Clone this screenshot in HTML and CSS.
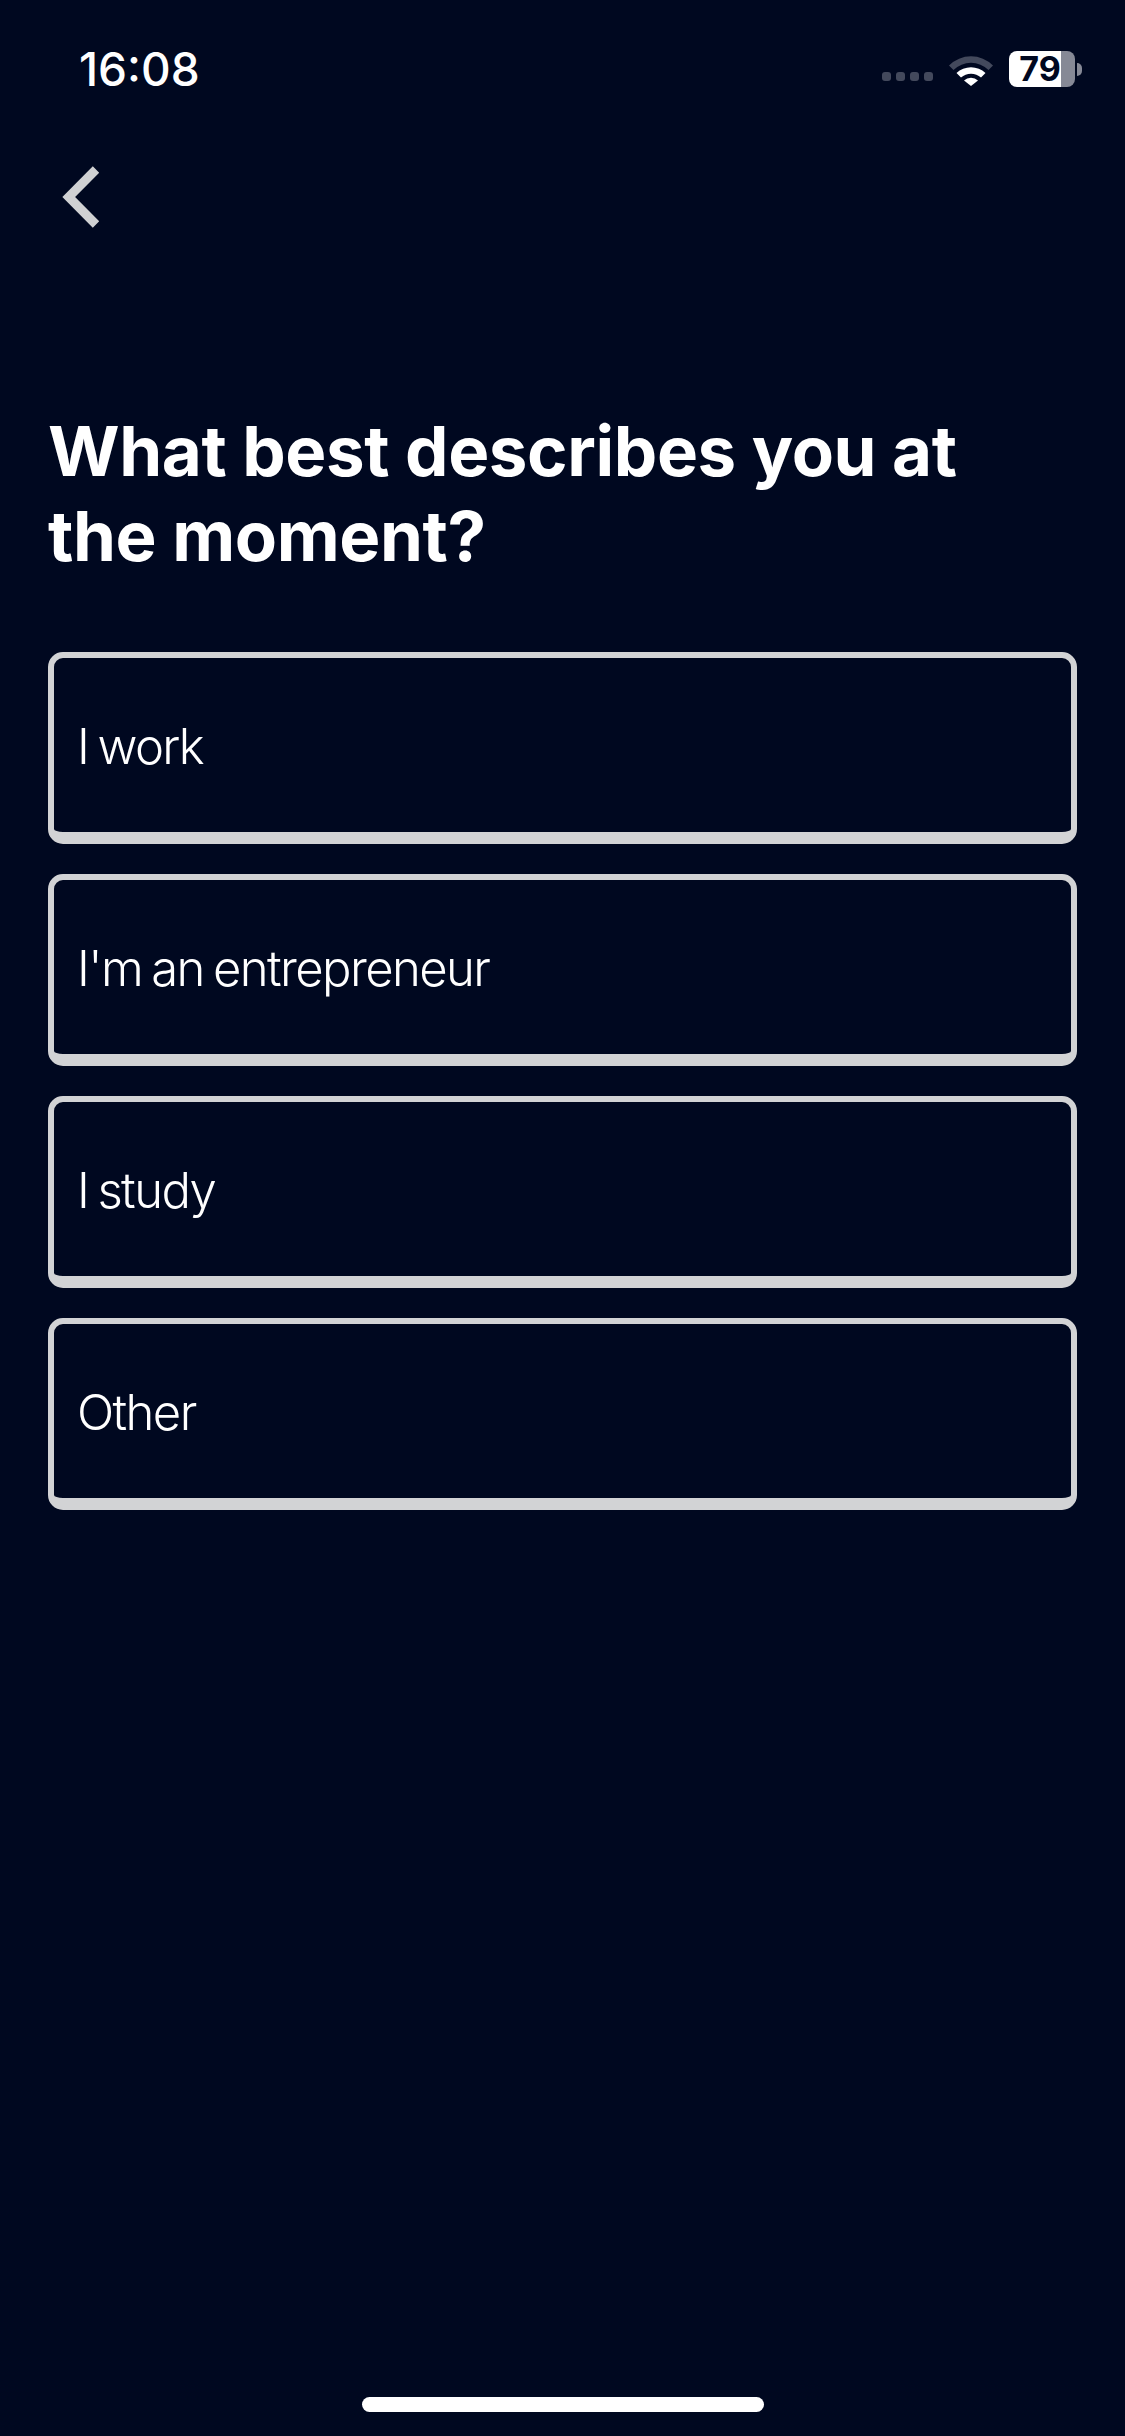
FILE: index.html
```html
<!DOCTYPE html>
<html lang="en">
<head>
    <meta charset="UTF-8">
    <meta name="viewport" content="width=device-width, initial-scale=1.0">
    <title>What best describes you</title>
    <link rel="stylesheet" href="styles.css">
</head>
<body>
    <div class="screen">
        <div class="status-bar">
            <span class="time">16:08</span>
            <div class="status-icons">
                <div class="signal">
                    <span class="dot"></span>
                    <span class="dot"></span>
                    <span class="dot"></span>
                    <span class="dot"></span>
                </div>
                <svg class="wifi" width="46" height="34" viewBox="0 0 46 34">
                    <path d="M1 13.500 A31 31 0 0 1 45 13.500 L40.500 18 A25 25 0 0 0 5.500 18 Z" fill="#43495c"/>
                    <path d="M8.500 21 A21 21 0 0 1 37.500 21 L33 25.500 A15 15 0 0 0 13 25.500 Z" fill="#ffffff"/>
                    <path d="M16 28.500 A10 10 0 0 1 30 28.500 L23 34 Z" fill="#ffffff"/>
                </svg>
                <div class="battery">
                    <div class="battery-body">
                        <span class="battery-level">79</span>
                    </div>
                    <span class="battery-cap"></span>
                </div>
            </div>
        </div>

        <button class="back-button">
            <svg width="40" height="64" viewBox="0 0 40 64">
                <path d="M36 4.500 L8.700 32 L36 59.500" fill="none" stroke="#d0d1d3" stroke-width="9"/>
            </svg>
        </button>

        <h1 class="title">What best describes you at the moment?</h1>

        <div class="options">
            <button class="option">I work</button>
            <button class="option">I'm an entrepreneur</button>
            <button class="option">I study</button>
            <button class="option">Other</button>
        </div>

        <div class="home-bar"></div>
    </div>
</body>
</html>
```

FILE: styles.css
```css
html, body {
    margin: 0;
    padding: 0;
    background: #000820;
}

.screen {
    width: 1125px;
    height: 2436px;
    display: flex;
    flex-direction: column;
    font-family: 'Inter', sans-serif;
    color: #ffffff;
    background: #000820;
}

/* Status bar */
.status-bar {
    height: 68px;
    padding: 0 43px 0 79px;
    margin-top: 35px;
    display: flex;
    justify-content: space-between;
    align-items: center;
}

.time {
    font-size: 46px;
    font-weight: 500;
    line-height: 68px;
}

.status-icons {
    display: flex;
    align-items: center;
}

.signal {
    display: flex;
    gap: 5px;
    margin: 14px 15px 0 0;
}

.dot {
    width: 9px;
    height: 9px;
    border-radius: 3px;
    background: #43495c;
}

.wifi {
    margin-right: 15px;
}

.battery {
    display: flex;
    align-items: center;
}

.battery-body {
    width: 66px;
    height: 36px;
    border-radius: 8px;
    background: linear-gradient(to right, #ffffff 52px, #868996 52px);
}

.battery-level {
    display: block;
    padding-right: 4px;
    font-size: 34px;
    font-weight: 700;
    line-height: 36px;
    text-align: center;
    color: #000820;
}

.battery-cap {
    width: 5px;
    height: 13px;
    margin-left: 2px;
    border-radius: 0 5px 5px 0;
    background: #868996;
}

/* Back button */
.back-button {
    align-self: flex-start;
    margin: 62px 0 0 60px;
    padding: 0;
    width: 40px;
    height: 64px;
    border: none;
    background: none;
}

/* Question */
.title {
    margin: 180px 0 0;
    padding: 0 48px;
    font-size: 69px;
    font-weight: 700;
    line-height: 85px;
    letter-spacing: -0.4px;
}

/* Answers */
.options {
    margin-top: 73px;
    padding: 0 48px;
    display: flex;
    flex-direction: column;
    gap: 30px;
}

.option {
    width: 100%;
    height: 192px;
    padding: 2px 0 0 23px;
    box-sizing: border-box;
    border: solid #d2d3d5;
    border-width: 6px 6px 12px 6px;
    border-radius: 15px;
    background: #000820;
    color: #ffffff;
    font-family: inherit;
    font-size: 49px;
    font-weight: 350;
    letter-spacing: -1.6px;
    word-spacing: -3px;
    text-align: left;
}

/* Home indicator */
.home-bar {
    width: 402px;
    height: 15px;
    margin: auto auto 24px;
    border-radius: 8px;
    background: #ffffff;
}
```
